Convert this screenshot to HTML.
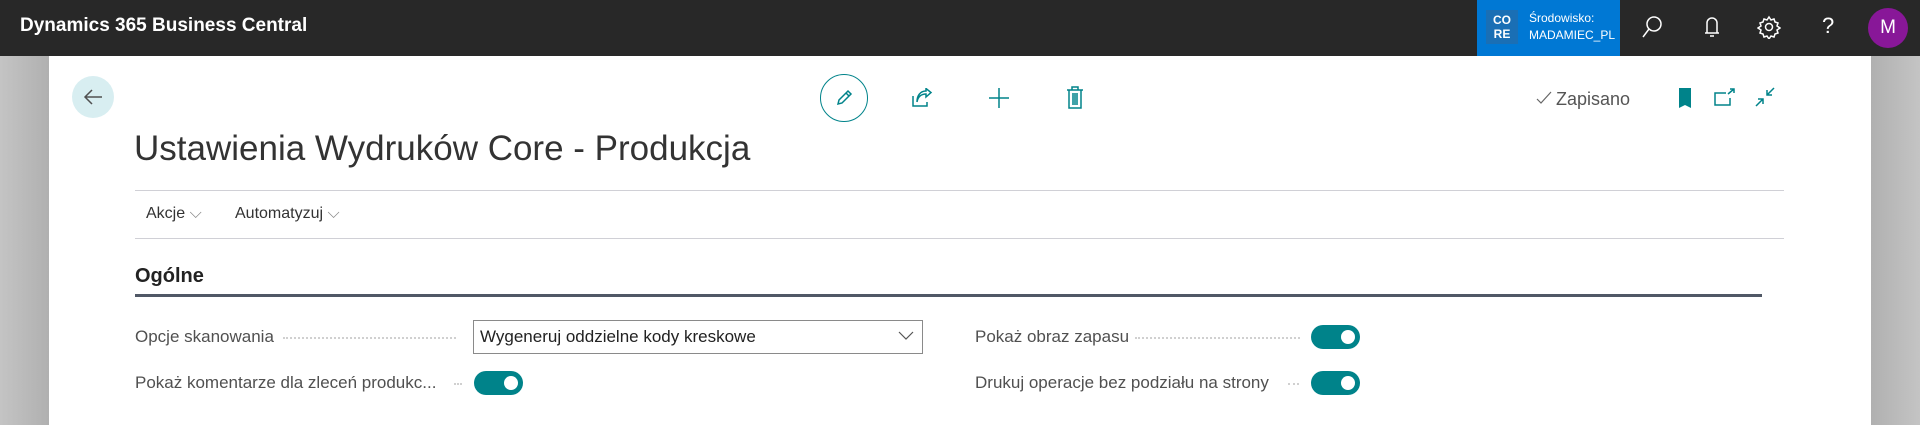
<!DOCTYPE html>
<html><head><meta charset="utf-8"><style>
*{margin:0;padding:0;box-sizing:border-box}
body{width:1920px;height:425px;overflow:hidden;font-family:"Liberation Sans",sans-serif;background:linear-gradient(90deg,#c4c4c4,#b0b0b0 49px,#b0b0b0 1871px,#c4c4c4);position:relative}
.top{position:absolute;left:0;top:0;width:1920px;height:56px;background:#282828}
.abs{position:absolute}
.panel{position:absolute;left:49px;top:56px;width:1822px;height:369px;background:#fff}
.lbl{position:absolute;font-size:17px;color:#505050;white-space:nowrap}
.dots{position:absolute;border-top:2px dotted #d0d0d0;height:0}
.tog{position:absolute;width:49px;height:24px;border-radius:12px;background:#00838a}
.tog::after{content:"";position:absolute;right:5px;top:5px;width:14px;height:14px;border-radius:50%;background:#fff}
</style></head><body>
<div class="top"></div>
<div class="abs" style="left:20px;top:15px;color:#fff;font-weight:bold;font-size:19px">Dynamics 365 Business Central</div>
<div class="abs" style="left:1477px;top:0;width:143px;height:56px;background:#0078d4"></div>
<div class="abs" style="left:1486px;top:10px;width:32px;height:34px;background:#1a6fb5;color:#fff;font-weight:bold;font-size:12px;line-height:14px;text-align:center;padding-top:3px">CO<br>RE</div>
<div class="abs" style="left:1529px;top:10px;color:#fff;font-size:12px;line-height:17px">Środowisko:<br>MADAMIEC_PL</div>
<svg class="abs" style="left:1640px;top:14px" width="24" height="26" viewBox="0 0 24 26" fill="none" stroke="#fff" stroke-width="1.5"><circle cx="14" cy="10" r="7"/><path d="M9 15 L3 23"/></svg>
<svg class="abs" style="left:1702px;top:14px" width="20" height="26" viewBox="0 0 20 26" fill="none" stroke="#fff" stroke-width="1.5"><path d="M5 19 V9 a5 5 0 0 1 10 0 V19 Z M3 19 H17 M8 22 H12"/></svg>
<svg class="abs" style="left:1757px;top:15px" width="24" height="24" viewBox="0 0 24 24" fill="none" stroke="#fff" stroke-width="1.5"><circle cx="12" cy="12" r="3.5"/><path d="M12 2 l2 3 3-1 1 3 3 1-1 3 3 2-3 2 1 3-3 1-1 3-3-1-2 3-2-3-3 1-1-3-3-1 1-3-3-2 3-2-1-3 3-1 1-3 3 1z"/></svg>
<div class="abs" style="left:1822px;top:13px;color:#fff;font-size:22px">?</div>
<div class="abs" style="left:1868px;top:8px;width:40px;height:40px;border-radius:50%;background:#881798;color:#fff;font-size:19px;text-align:center;line-height:40px">M</div>

<div class="panel"></div>
<div class="abs" style="left:72px;top:76px;width:42px;height:42px;border-radius:50%;background:#d8eef1"></div>
<svg class="abs" style="left:82px;top:86px" width="22" height="22" viewBox="0 0 22 22" fill="none" stroke="#505050" stroke-width="1.5"><path d="M20 11 H3 M10 4 L3 11 L10 18"/></svg>
<div class="abs" style="left:820px;top:74px;width:48px;height:48px;border-radius:50%;border:1.5px solid #00838a"></div>
<svg class="abs" style="left:834px;top:88px" width="20" height="20" viewBox="0 0 20 20" fill="none" stroke="#00838a" stroke-width="1.5"><path d="M4 16 L5 12 L14 3 L17 6 L8 15 Z M12 5 L15 8"/></svg>
<svg class="abs" style="left:911px;top:88px" width="22" height="20" viewBox="0 0 22 20" fill="none" stroke="#00838a" stroke-width="1.5"><path d="M2 8 V18 H16 V14 M6 14 C7 8 11 6 15 6 V9 L20 4.5 L15 0.5 V3 C9 3 6 8 6 14"/></svg>
<svg class="abs" style="left:988px;top:87px" width="22" height="22" viewBox="0 0 22 22" fill="none" stroke="#00838a" stroke-width="1.5"><path d="M11 1 V21 M1 11 H21"/></svg>
<svg class="abs" style="left:1066px;top:86px" width="18" height="24" viewBox="0 0 18 24" fill="none" stroke="#00838a" stroke-width="1.5"><path d="M1 4 H17 M6 4 V1 H12 V4 M3 4 V22 H15 V4 M7 7 V19 M9 7 V19 M11 7 V19"/></svg>
<svg class="abs" style="left:1536px;top:91px" width="16" height="14" viewBox="0 0 16 14" fill="none" stroke="#666" stroke-width="1.2"><path d="M1 8 L5 12 L15 1"/></svg>
<div class="abs" style="left:1556px;top:89px;font-size:18px;color:#555">Zapisano</div>
<svg class="abs" style="left:1678px;top:88px" width="14" height="20" viewBox="0 0 14 20"><path d="M1 0 H13 V20 L7 17 L1 20 Z" fill="#00838a"/></svg>
<svg class="abs" style="left:1714px;top:88px" width="22" height="18" viewBox="0 0 22 18" fill="none" stroke="#00838a" stroke-width="1.5"><path d="M12 5 H1 V17 H16 V10 M14 6 L20 1 M16 1 H20 V5"/></svg>
<svg class="abs" style="left:1754px;top:86px" width="22" height="22" viewBox="0 0 22 22" fill="none" stroke="#00838a" stroke-width="1.5"><path d="M20 2 L13 9 M13 4 V9 H18 M2 20 L9 13 M4 13 H9 V18"/></svg>

<div class="abs" style="left:134px;top:129px;font-size:35px;color:#333;font-weight:300;letter-spacing:0px">Ustawienia Wydruków Core - Produkcja</div>
<div class="abs" style="left:135px;top:190px;width:1649px;height:1px;background:#d0d0d6"></div>
<div class="abs" style="left:146px;top:205px;font-size:16px;color:#333">Akcje <span style="color:#888">⌵</span></div>
<div class="abs" style="left:235px;top:205px;font-size:16px;color:#333">Automatyzuj <span style="color:#888">⌵</span></div>
<div class="abs" style="left:135px;top:238px;width:1649px;height:1px;background:#d0d0d6"></div>
<div class="abs" style="left:135px;top:265px;font-size:20px;font-weight:bold;color:#222">Ogólne</div>
<div class="abs" style="left:135px;top:294px;width:1627px;height:3px;background:#505866"></div>

<div class="lbl" style="left:135px;top:327px">Opcje skanowania</div>
<div class="dots" style="left:283px;top:337px;width:173px"></div>
<div class="abs" style="left:473px;top:320px;width:450px;height:34px;border:1px solid #8a8a8a"></div>
<div class="abs" style="left:480px;top:327px;font-size:17px;color:#222">Wygeneruj oddzielne kody kreskowe</div>
<svg class="abs" style="left:898px;top:331px" width="16" height="10" viewBox="0 0 16 10" fill="none" stroke="#555" stroke-width="1.2"><path d="M1 1 L8 8 L15 1"/></svg>
<div class="lbl" style="left:975px;top:327px">Pokaż obraz zapasu</div>
<div class="dots" style="left:1135px;top:337px;width:165px"></div>
<div class="tog" style="left:1311px;top:325px"></div>

<div class="lbl" style="left:135px;top:373px">Pokaż komentarze dla zleceń produkc...</div>
<div class="dots" style="left:454px;top:383px;width:8px"></div>
<div class="tog" style="left:474px;top:371px"></div>
<div class="lbl" style="left:975px;top:373px">Drukuj operacje bez podziału na strony</div>
<div class="dots" style="left:1288px;top:383px;width:11px"></div>
<div class="tog" style="left:1311px;top:371px"></div>
</body></html>
